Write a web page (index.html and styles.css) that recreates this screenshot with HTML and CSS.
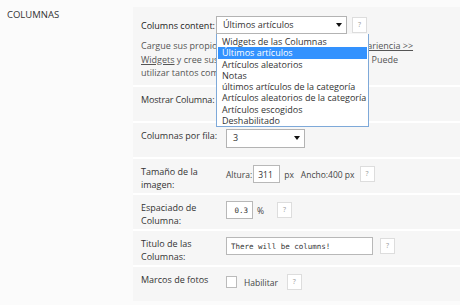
FILE: index.html
```html
<!DOCTYPE html>
<html>
<head>
  <link rel="stylesheet" href="styles.css">
</head>
<body>
  <div class="page">
    <div class="section-title">COLUMNAS</div>
    <div class="panel">
      <div class="row row-first">
        <div class="inline-field">
          <span class="label-inline">Columns content:</span>
          <div class="select select-wide">
            <span>Últimos artículos</span>
          </div>
          <span class="help">?</span>
          <ul class="dropdown">
            <li>Widgets de las Columnas</li>
            <li class="selected">Últimos artículos</li>
            <li>Artículos aleatorios</li>
            <li>Notas</li>
            <li>últimos artículos de la categoría</li>
            <li>Artículos aleatorios de la categoría</li>
            <li>Artículos escogidos</li>
            <li>Deshabilitado</li>
          </ul>
        </div>
        <p class="desc">
          Cargue sus propios widgets en las columnas desde <a href="#">Apariencia &gt;&gt;<br>Widgets</a> y cree sus columnas con un widget Columnas. Puede<br>
          utilizar tantos como quiera.
        </p>
      </div>

      <div class="row">
        <div class="label label-tight">Mostrar Columna:</div>
        <div class="controls"></div>
      </div>

      <div class="row">
        <div class="label">Columnas por fila:</div>
        <div class="controls">
          <div class="select select-small"><span>3</span></div>
        </div>
      </div>

      <div class="row">
        <div class="label">Tamaño de la<br>imagen:</div>
        <div class="controls">
          <span class="text">Altura:</span>
          <input class="input input-num" type="text" value="311">
          <span class="text unit">px</span>
          <span class="text ancho">Ancho:400 px</span>
          <span class="help">?</span>
        </div>
      </div>

      <div class="row">
        <div class="label">Espaciado de<br>Columna:</div>
        <div class="controls">
          <input class="input input-pct mono" type="text" value="0.3">
          <span class="text unit">%</span>
          <span class="help help-pct">?</span>
        </div>
      </div>

      <div class="row">
        <div class="label">Titulo de las<br>Columnas:</div>
        <div class="controls">
          <input class="input input-title mono" type="text" value="There will be columns!">
          <span class="help help-far">?</span>
        </div>
      </div>

      <div class="row">
        <div class="label">Marcos de fotos</div>
        <div class="controls">
          <span class="checkbox"></span>
          <span class="text check-label">Habilitar</span>
          <span class="help help-check">?</span>
        </div>
      </div>
    </div>
  </div>
</body>
</html>
```

FILE: styles.css
```css
html, body {
  margin: 0;
  padding: 0;
  background-color: #fbfbfb;
  font-family: "Open Sans", "Noto Sans", sans-serif;
  font-size: 9px;
  color: #333;
}

.page {
  display: flex;
  align-items: flex-start;
  height: 305px;
  overflow: hidden;
}

.section-title {
  width: 126px;
  padding: 8px 0 0 7px;
  line-height: 13px;
  font-size: 9.5px;
  color: #333;
}

.panel {
  flex: 1;
  margin-top: 7px;
  background-color: #f6f6f6;
}

/* rows of the options table */
.row {
  display: flex;
  align-items: flex-start;
  height: 34px;
  padding: 0 8px;
  border-top: 2px solid #ffffff;
}

.row-first {
  display: block;
  height: 69px;
  border-top: none;
  padding-top: 9px;
}

.label {
  width: 80px;
  padding-top: 6px;
  line-height: 13px;
  white-space: nowrap;
  color: #333;
}

.label-tight {
  letter-spacing: -0.15px;
}

.controls {
  display: flex;
  align-items: center;
  margin-left: 5px;
  padding-top: 5px;
  height: 20px;
}

.inline-field {
  position: relative;
  display: flex;
  align-items: center;
  height: 18px;
}

.label-inline {
  width: 75px;
  white-space: nowrap;
  color: #222;
}

/* fake select box */
.select {
  position: relative;
  box-sizing: border-box;
  height: 18px;
  line-height: 16px;
  padding-left: 6px;
  background-color: #fff;
  border: 1px solid #b3b3b3;
  color: #333;
}

.select::after {
  content: "";
  position: absolute;
  right: 4px;
  top: 6px;
  border-left: 3px solid transparent;
  border-right: 3px solid transparent;
  border-top: 4px solid #111;
}

.select-wide {
  width: 131px;
}

.select-small {
  width: 79px;
  height: 19px;
}

.help {
  box-sizing: border-box;
  display: inline-block;
  width: 15px;
  height: 16px;
  margin-left: 5px;
  line-height: 14px;
  text-align: center;
  font-size: 7px;
  color: #999;
  background-color: #fff;
  border: 1px solid #ddd;
}

.help-far {
  margin-left: 7px;
}

.help-pct {
  margin-left: 13px;
}

.help-check {
  margin-left: 9px;
}

/* open dropdown list */
.dropdown {
  position: absolute;
  left: 75px;
  top: 18px;
  z-index: 2;
  box-sizing: border-box;
  width: 153px;
  margin: 0;
  padding: 2px 1px 0;
  list-style: none;
  background-color: #fff;
  border: 1px solid #7ea9d9;
  border-top: none;
}

.dropdown li {
  height: 11.3px;
  line-height: 11.3px;
  padding-left: 4px;
  color: #333;
  white-space: nowrap;
}

.dropdown li.selected {
  background-color: #3392fe;
  color: #fff;
}

.desc {
  margin: 5px 0 0;
  line-height: 13.5px;
  color: #555;
  white-space: nowrap;
}

.desc a {
  color: #555;
}

.text {
  font-size: 8.5px;
  color: #444;
}

.unit {
  margin-left: 4px;
}

.ancho {
  margin-left: 7px;
}

.input {
  box-sizing: border-box;
  height: 18px;
  padding: 0 4px;
  font-family: "Open Sans", sans-serif;
  font-size: 8.5px;
  color: #333;
  background-color: #fff;
  border: 1px solid #b8b8b8;
  outline: none;
}

.input-num {
  width: 27px;
  margin-left: 1px;
}

.input-pct {
  width: 27px;
  text-align: right;
}

.input-title {
  width: 147px;
}

.mono {
  font-family: "DejaVu Sans Mono", monospace;
  font-size: 7.5px;
}

.checkbox {
  box-sizing: border-box;
  width: 11px;
  height: 12px;
  background-color: #fff;
  border: 1px solid #bbb;
}

.check-label {
  margin-left: 7px;
}
```
